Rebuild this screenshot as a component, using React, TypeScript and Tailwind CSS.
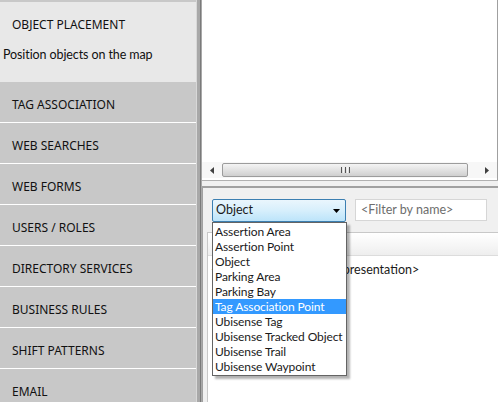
import React from "react";

const items = [
  "TAG ASSOCIATION",
  "WEB SEARCHES",
  "WEB FORMS",
  "USERS / ROLES",
  "DIRECTORY SERVICES",
  "BUSINESS RULES",
  "SHIFT PATTERNS",
  "EMAIL",
];

const options = [
  "Assertion Area",
  "Assertion Point",
  "Object",
  "Parking Area",
  "Parking Bay",
  "Tag Association Point",
  "Ubisense Tag",
  "Ubisense Tracked Object",
  "Ubisense Trail",
  "Ubisense Waypoint",
];

const noto = { fontFamily: '"Noto Sans", "Open Sans", sans-serif' };
const lato = { fontFamily: 'Lato, "Noto Sans", sans-serif' };

export default function App() {
  return (
    <div
      className="relative flex w-[498px] h-[402px] overflow-hidden bg-[#f0f0f0] text-[#1a1a1a]"
      style={noto}
    >
      {/* Left navigation */}
      <div className="w-[196px] flex flex-col bg-[#c8c8c8] pt-[2px] shrink-0 overflow-hidden">
        <div className="h-[80px] shrink-0 bg-[#e8e8e8] flex flex-col">
          <div className="pl-[12px] pt-[14px] text-[12px] leading-[18px] text-[#111]">
            OBJECT PLACEMENT
          </div>
          <div className="pl-[3px] pt-[12px] text-[12.5px] leading-[18px] text-[#111] tracking-[-0.1px]" style={lato}>
            Position objects on the map
          </div>
        </div>
        {items.map((t) => (
          <div
            key={t}
            className="h-[41px] shrink-0 border-b border-white flex items-center pl-[12px] pt-[6px] text-[12px] text-[#111]"
          >
            {t}
          </div>
        ))}
      </div>

      {/* Splitter */}
      <div className="w-[6px] shrink-0 flex">
        <div className="w-[1px] bg-[#d8d8d8]" />
        <div className="w-[3px] bg-[#a8a8a8]" />
        <div className="w-[1px] bg-[#7a7a7a]" />
        <div className="w-[1px] bg-[#a8a8a8]" />
      </div>

      {/* Right side */}
      <div className="flex-1 flex flex-col min-w-0">
        {/* Top pane */}
        <div className="h-[180px] shrink-0 bg-white border-r border-[#a0a0a0] flex flex-col">
          <div className="flex-1" />
          <div className="h-[16px] mb-[2px] flex items-center bg-[#f7f7f7] px-[2px]">
            <div className="w-[16px] h-[14px] flex items-center justify-center">
              <svg width="4" height="7" viewBox="0 0 4 7">
                <path d="M4 0 L0 3.5 L4 7 Z" fill="#404040" />
              </svg>
            </div>
            <div className="w-[246px] h-[14px] ml-[2px] rounded-[2px] border border-[#9c9c9c] bg-gradient-to-b from-[#f4f4f4] via-[#e2e2e2] to-[#cfcfcf] flex items-center justify-center">
              <div className="flex gap-[1px]">
                <div className="w-[1px] h-[6px] bg-[#555]" />
                <div className="w-[1px] h-[6px] bg-[#f4f4f4]" />
                <div className="w-[1px] h-[6px] bg-[#555]" />
                <div className="w-[1px] h-[6px] bg-[#f4f4f4]" />
                <div className="w-[1px] h-[6px] bg-[#555]" />
              </div>
            </div>
            <div className="flex-1" />
            <div className="w-[16px] h-[14px] flex items-center justify-center">
              <svg width="4" height="7" viewBox="0 0 4 7">
                <path d="M0 0 L4 3.5 L0 7 Z" fill="#404040" />
              </svg>
            </div>
          </div>
        </div>

        {/* Horizontal splitter */}
        <div className="h-[8px] shrink-0 bg-[#f0f0f0] border-t border-[#b0b0b0] border-b-[2px] border-b-[#a0a0a0]" />

        {/* Bottom pane */}
        <div className="flex-1 bg-[#f0f0f0] border-l border-[#a0a0a0] flex flex-col min-h-0" style={lato}>
          <div className="flex items-start pt-[11px] pl-[9px] gap-[9px]">
            <div className="w-[134px] h-[23px] rounded-[2px] border border-[#3c7fb1] bg-gradient-to-b from-[#eaf6fd] via-[#d7effc] to-[#bce4fa] flex items-center pl-[3px] pr-[5px] text-[12.5px]">
              <span className="flex-1">Object</span>
              <svg width="7" height="4" viewBox="0 0 7 4">
                <path d="M0 0 L7 0 L3.5 4 Z" fill="#000" />
              </svg>
            </div>
            <div className="w-[132px] h-[22px] bg-white border border-[#d6d6d6] flex items-center pl-[5px] text-[12.5px] text-[#6d6d6d]">
              &lt;Filter by name&gt;
            </div>
          </div>

          {/* List */}
          <div className="mt-[10px] ml-[4px] flex-1 bg-white border-t border-l border-[#c8c8c8] flex flex-col">
            <div className="h-[23px] bg-gradient-to-b from-[#ffffff] via-[#f7f7f7] to-[#eeeeee] border-b border-[#dcdcdc] text-[12.5px] flex items-center pl-[4px]">
              Category
            </div>
            <div className="pl-[3px] pt-[6px] text-[12.5px] leading-[16px] whitespace-nowrap">
              &lt;Objects without any representation&gt;
            </div>
          </div>
        </div>
      </div>

      {/* Dropdown list */}
      <div
        className="absolute left-[212px] top-[222px] w-[135px] bg-white border border-[#646464] flex flex-col py-[1px] text-[12px] tracking-[-0.1px]"
        style={{ ...lato, boxShadow: "3px 3px 2px rgba(0,0,0,0.3)" }}
      >
        {options.map((o, i) => (
          <div
            key={o}
            className={
              i === 5
                ? "h-[15px] leading-[15px] pl-[2px] bg-[#3399ff] text-white whitespace-nowrap overflow-hidden"
                : "h-[15px] leading-[15px] pl-[2px] text-[#1a1a1a] whitespace-nowrap overflow-hidden"
            }
          >
            {o}
          </div>
        ))}
      </div>
    </div>
  );
}
